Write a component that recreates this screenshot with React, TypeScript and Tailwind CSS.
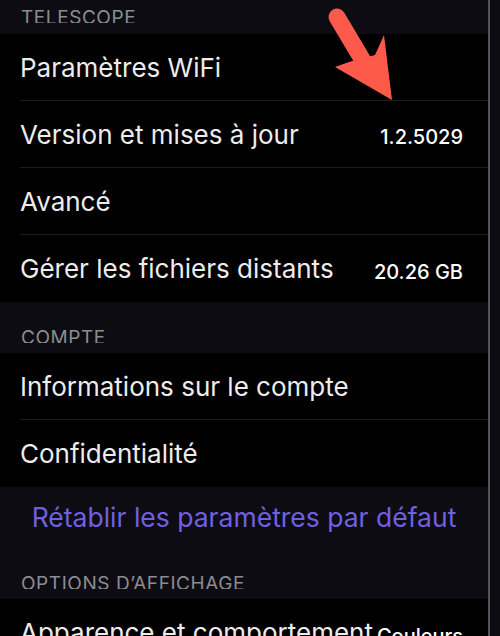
import React from "react";

const font = { fontFamily: "Inter, 'Noto Sans', 'Liberation Sans', sans-serif" };

const Header = ({ title, first }: { title: string; first?: boolean }) => (
  <div
    className={`shrink-0 bg-[#0d0c12] px-[21px] ${first ? "h-[34px] pt-[8px]" : "h-[51px] pt-[26px]"}`}
  >
    <div className="h-[15px] overflow-hidden">
      <p className="text-[19px] leading-none tracking-[0.03em] text-[#8c8c92] uppercase">
        {title}
      </p>
    </div>
  </div>
);

const Row = ({
  label,
  value,
  last,
}: {
  label: string;
  value?: string;
  last?: boolean;
}) => (
  <div className="shrink-0 h-[67px] bg-black pl-[20px]">
    <div
      className={`h-full flex items-center justify-between pr-[25px] ${last ? "" : "border-b border-[#1c1c1f]"
        }`}
    >
      <span className="text-[26px] text-[#ececec] whitespace-nowrap">{label}</span>
      {value && (
        <span className="mt-[6px] text-[20px] font-medium text-white whitespace-nowrap">
          {value}
        </span>
      )}
    </div>
  </div>
);

const Arrow = () => (
  <svg
    className="absolute inset-0 pointer-events-none"
    width="500"
    height="636"
    viewBox="0 0 500 636"
  >
    <line
      x1="337"
      y1="17"
      x2="362"
      y2="59"
      stroke="#fd5a4b"
      strokeWidth="17"
      strokeLinecap="round"
    />
    <polygon points="335,67 349,62 375,55 384,35 392,100" fill="#fd5a4b" />
  </svg>
);

export default function App() {
  return (
    <div className="relative w-[500px] h-[636px] overflow-hidden flex bg-[#0d0c12]" style={font}>
      <div className="w-[488px] flex flex-col">
        <Header title="Telescope" first />
        <Row label="Paramètres WiFi" />
        <Row label="Version et mises à jour" value="1.2.5029" />
        <Row label="Avancé" />
        <Row label="Gérer les fichiers distants" value="20.26 GB" last />

        <Header title="Compte" />
        <Row label="Informations sur le compte" />
        <Row label="Confidentialité" last />

        <div className="shrink-0 h-[61px] bg-[#0d0c12] flex items-center justify-center">
          <span className="text-[26.5px] text-[#7060e0] whitespace-nowrap">
            Rétablir les paramètres par défaut
          </span>
        </div>

        <Header title="Options d’affichage" />
        <Row label="Apparence et comportement" value="Couleurs" last />
      </div>
      <div className="w-[2px] bg-[#56565a]" />
      <div className="flex-1" />
      <Arrow />
    </div>
  );
}
